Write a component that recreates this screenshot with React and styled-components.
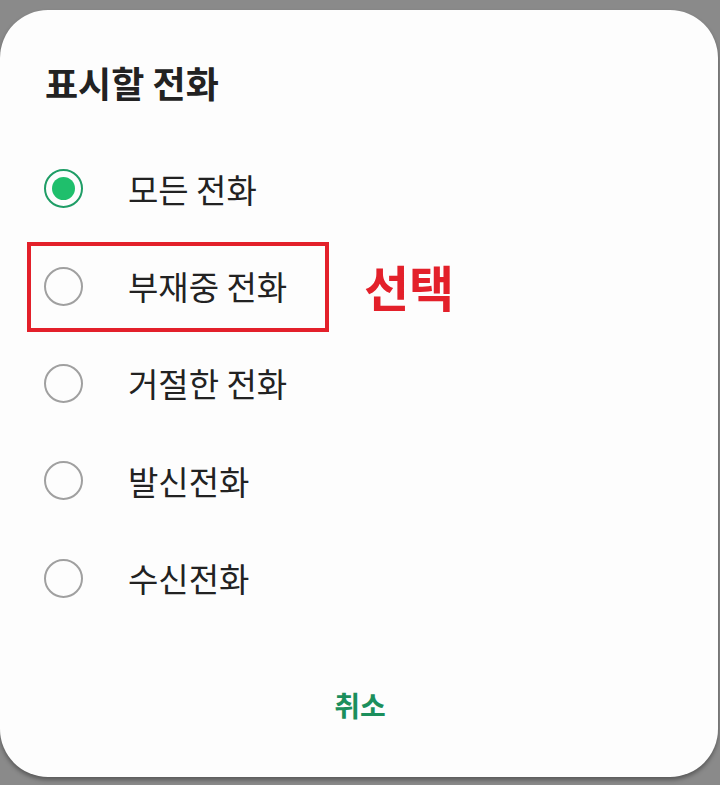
import React from "react";
import styled, { createGlobalStyle } from "styled-components";

const Global = createGlobalStyle`
  html, body { margin: 0; padding: 0; background: #8a8a8a; }
  body { font-family: "Noto Sans CJK KR", "Noto Sans", sans-serif; height: 785px; overflow: hidden; }
`;

const Dialog = styled.div`
  margin-top: 10px;
  width: 718px;
  height: 767px;
  box-sizing: border-box;
  background: #fdfdfd;
  border-radius: 48px;
  box-shadow: 0 3px 4px rgba(0,0,0,0.35);
  padding-top: 52px;
  display: flex;
  flex-direction: column;
`;

const Title = styled.h1`
  margin: 0 0 38px 45px;
  font-size: 36px;
  line-height: 40px;
  font-weight: 700;
  color: #222;
`;

const List = styled.div`
  display: flex;
  flex-direction: column;
`;

const Row = styled.div`
  position: relative;
  height: 97.4px;
  display: flex;
  align-items: center;
  padding-left: 44px;
  gap: 45px;
`;

const Radio = styled.span`
  box-sizing: border-box;
  width: 39px;
  height: 39px;
  border-radius: 50%;
  border: 2px solid ${p => (p.$checked ? "#1f9d66" : "#a0a0a0")};
  display: flex;
  align-items: center;
  justify-content: center;
  flex: none;
  &::after {
    content: "";
    display: ${p => (p.$checked ? "block" : "none")};
    width: 23px;
    height: 23px;
    border-radius: 50%;
    background: #1fbf6c;
  }
`;

const Label = styled.span`
  font-size: 33px;
  line-height: 40px;
  color: #222;
`;

const Highlight = styled.div`
  position: absolute;
  left: 27px;
  top: 5px;
  width: 302px;
  height: 90px;
  box-sizing: border-box;
  border: 4px solid #e3202a;
  pointer-events: none;
`;

const Note = styled.span`
  position: absolute;
  left: 364px;
  top: 50%;
  transform: translateY(-50%);
  font-size: 49px;
  line-height: 50px;
  font-weight: 700;
  color: #e3202a;
`;

const Footer = styled.div`
  flex: 1;
  display: flex;
  justify-content: center;
  align-items: flex-start;
  padding-top: 52px;
`;

const Cancel = styled.button`
  border: none;
  background: none;
  padding: 0 12px;
  height: 52px;
  font-family: inherit;
  font-size: 28px;
  font-weight: 700;
  color: #1b8f5c;
  margin-left: 2px;
`;

const options = ["모든 전화", "부재중 전화", "거절한 전화", "발신전화", "수신전화"];

export default function App() {
  return (
    <>
      <Global />
      <Dialog>
        <Title>표시할 전화</Title>
        <List>
          {options.map((o, i) => (
            <Row key={o}>
              <Radio $checked={i === 0} />
              <Label>{o}</Label>
              {i === 1 && (
                <>
                  <Highlight />
                  <Note>선택</Note>
                </>
              )}
            </Row>
          ))}
        </List>
        <Footer>
          <Cancel>취소</Cancel>
        </Footer>
      </Dialog>
    </>
  );
}
